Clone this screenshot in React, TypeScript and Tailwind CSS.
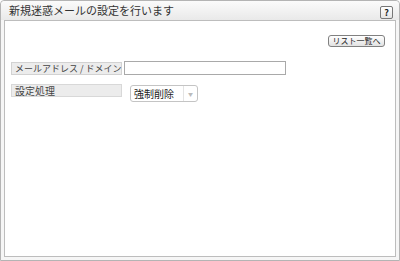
export default function App() {
  const font = { fontFamily: '"Noto Sans CJK JP", "Noto Sans", sans-serif' };
  return (
    <div className="w-[400px] h-[261px] bg-white" style={font}>
      <div className="flex h-full flex-col rounded-t-[4px] border border-[#b4b4b4] bg-[#f6f6f6]">
        <div className="flex h-[19px] shrink-0 items-center justify-between rounded-t-[4px] bg-gradient-to-b from-[#fbfbfb] to-[#e9e9e9] pl-[8px] pr-[6px]">
          <span className="text-[11px] leading-none text-[#333]">新規迷惑メールの設定を行います</span>
          <button className="mt-[3px] flex h-[13px] w-[13px] items-center justify-center rounded-[2px] border border-[#777] bg-gradient-to-b from-white to-[#e4e4e4] text-[9px] font-bold leading-none text-[#222]">
            ?
          </button>
        </div>
        <div className="mx-[3px] mb-[3px] flex-1 border border-[#bdbdbd] bg-white">
          <div className="flex justify-end pr-[10px] pt-[14px]">
            <button className="flex h-[12px] w-[57px] items-center justify-center whitespace-nowrap rounded-[3px] border border-[#808080] bg-gradient-to-b from-white to-[#e2e2e2] text-[8px] leading-none text-[#222]">
              リスト一覧へ
            </button>
          </div>
          <div className="mt-[14px] flex items-center pl-[6px]">
            <div className="flex h-[13px] w-[111px] shrink-0 items-center whitespace-nowrap border border-[#d2d2d2] bg-[#ececec] pl-[3px] text-[9px] leading-none text-[#444]">
              メールアドレス / ドメイン
            </div>
            <input className="ml-[2px] h-[14px] w-[162px] shrink-0 border border-[#a9a9a9] bg-white text-[10px] outline-none" />
          </div>
          <div className="mt-[9px] flex items-start pl-[6px]">
            <div className="flex h-[13px] w-[111px] shrink-0 items-center border border-[#d8d8d8] bg-[#ececec] pl-[3px] text-[10px] leading-none text-[#444]">
              設定処理
            </div>
            <div className="ml-[8px] mt-[1px] flex h-[17px] w-[68px] shrink-0 items-center rounded-[3px] border border-[#c4c4c4] bg-white">
              <span className="flex-1 whitespace-nowrap pl-[3px] text-[10px] leading-none text-[#222]">強制削除</span>
              <span className="flex h-full w-[14px] items-center justify-center border-l border-[#e4e4e4] text-[5px] text-[#bbb]">▼</span>
            </div>
          </div>
        </div>
      </div>
    </div>
  );
}
